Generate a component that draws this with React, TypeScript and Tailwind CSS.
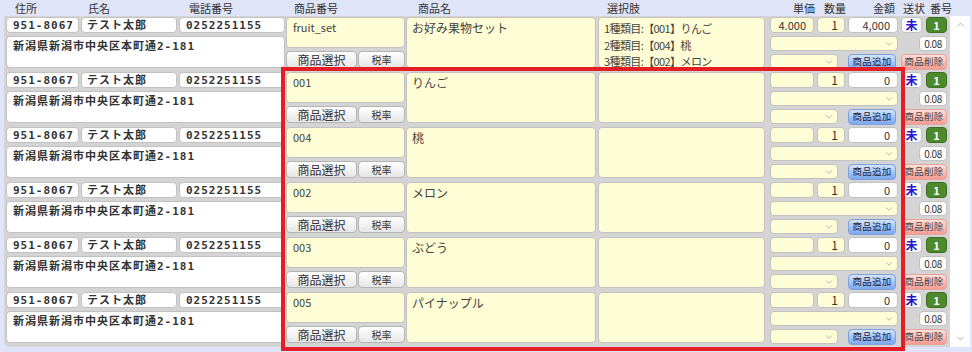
import { ChevronDown, ChevronUp } from "lucide-react";

type Row = {
  code: string;
  name: string;
  opts: string[];
  price: string;
  qty: string;
  amount: string;
};

const rows: Row[] = [
  {
    code: "fruit_set",
    name: "お好み果物セット",
    opts: ["1種類目:【001】りんご", "2種類目:【004】桃", "3種類目:【002】メロン"],
    price: "4.000",
    qty: "1",
    amount: "4,000",
  },
  { code: "001", name: "りんご", opts: [], price: "", qty: "1", amount: "0" },
  { code: "004", name: "桃", opts: [], price: "", qty: "1", amount: "0" },
  { code: "002", name: "メロン", opts: [], price: "", qty: "1", amount: "0" },
  { code: "003", name: "ぶどう", opts: [], price: "", qty: "1", amount: "0" },
  { code: "005", name: "パイナップル", opts: [], price: "", qty: "1", amount: "0" },
];

const box = "rounded-[4px] border border-[#c2c2c2]";
const yellow = "bg-[#fffdd6]";
const boldText =
  "font-['DejaVu_Sans_Mono','Noto_Sans_CJK_JP',monospace] font-bold text-[11px] tracking-[1px] text-[#333] leading-none";

const Select = ({ w }: { w: string }) => (
  <div className={`${w} h-[15px] ${box} ${yellow} flex items-center justify-end pr-[3px]`}>
    <ChevronDown size={10} strokeWidth={1.5} className="text-[#8a8a8a]" />
  </div>
);

const OrderRow = ({ r }: { r: Row }) => (
  <div className="flex h-[55px] pt-[1px] pl-[2px]">
    {/* 住所・氏名・電話 */}
    <div className="w-[279px] flex flex-col gap-[3px]">
      <div className="flex gap-[2px] h-[16px]">
        <div className={`w-[73px] ${box} bg-white pl-[6px] flex items-center ${boldText}`}>951-8067</div>
        <div className={`w-[96px] ${box} bg-white pl-[5px] flex items-center ${boldText}`}>テスト太郎</div>
        <div className={`w-[106px] ${box} bg-white pl-[6px] flex items-center ${boldText}`}>0252251155</div>
      </div>
      <div className={`h-[32px] ${box} bg-white pl-[6px] pt-[4px] ${boldText}`}>
        新潟県新潟市中央区本町通2-181
      </div>
    </div>

    {/* 商品番号 */}
    <div className="ml-[1px] w-[119px] flex flex-col">
      <div className={`h-[31px] ${box} ${yellow} pl-[6px] pt-[3px] text-[11px] leading-[13px] text-[#444]`}>
        {r.code}
      </div>
      <div className="mt-[3px] flex gap-[1px] h-[17px]">
        <button className="w-[71px] rounded-[4px] border border-[#b4b4b4] bg-gradient-to-b from-white to-[#e6e6e6] text-[12px] leading-none text-[#333]">
          商品選択
        </button>
        <button className="w-[47px] rounded-[4px] border border-[#b4b4b4] bg-gradient-to-b from-white to-[#e6e6e6] text-[10px] leading-none text-[#333]">
          税率
        </button>
      </div>
    </div>

    {/* 商品名 */}
    <div className={`ml-[1px] w-[190px] h-[51px] ${box} ${yellow} pl-[5px] pt-[2px] text-[12px] leading-[15px] text-[#444]`}>
      {r.name}
    </div>

    {/* 選択肢 */}
    <div
      className={`ml-[2px] w-[167px] h-[51px] ${box} ${yellow} pl-[5px] pt-[2px] text-[11px] leading-[16.5px] tracking-[-0.6px] text-[#444]`}
    >
      {r.opts.map((o) => (
        <div key={o}>{o}</div>
      ))}
    </div>

    {/* 単価・数量・金額 */}
    <div className="ml-[5px] w-[177px] flex flex-col">
      <div className="flex h-[16px] items-stretch">
        <div className={`w-[44px] ${box} ${yellow} pr-[7px] flex items-center justify-end text-[11px] text-[#333]`}>{r.price}</div>
        <div className={`ml-[3px] w-[28px] ${box} ${yellow} pr-[6px] flex items-center justify-end text-[12px] text-[#333]`}>{r.qty}</div>
        <div className={`ml-[3px] w-[50px] ${box} bg-white pr-[7px] flex items-center justify-end text-[11px] text-[#333]`}>{r.amount}</div>
        <div className={`ml-[3px] w-[21px] ${box} bg-white flex items-center justify-center text-[12px] font-bold text-[#2a16cc]`}>未</div>
        <div className="ml-[4px] w-[21px] rounded-[4px] border border-[#3c6e22] bg-[#4d8a2e] flex items-center justify-center text-[11px] font-bold text-white">1</div>
      </div>
      <div className="mt-[3px] flex h-[15px]">
        <Select w="w-[128px]" />
        <div className={`ml-[21px] w-[28px] ${box} bg-white flex items-center justify-center text-[10px] tracking-[-0.5px] text-[#333]`}>0.08</div>
      </div>
      <div className="mt-[3px] flex h-[16px]">
        <Select w="w-[68px]" />
        <button className="ml-[10px] w-[48px] rounded-[4px] border border-[#7e9fd8] bg-gradient-to-b from-[#d4e4fc] to-[#7ca7ee] text-[9.5px] tracking-[0.3px] leading-none text-[#223]">
          商品追加
        </button>
        <button className="ml-[5px] w-[46px] rounded-[4px] border border-[#e4a39d] bg-gradient-to-b from-[#fde0dc] to-[#f59b93] text-[9.5px] tracking-[0.3px] leading-none text-[#444]">
          商品削除
        </button>
      </div>
    </div>
  </div>
);

const headers: [string, string][] = [
  ["住所", "w-[88px] pl-[15px]"],
  ["氏名", "w-[101px]"],
  ["電話番号", "w-[105px]"],
  ["商品番号", "w-[124px]"],
  ["商品名", "w-[189px]"],
  ["選択肢", "w-[186px]"],
  ["単価", "w-[31px]"],
  ["数量", "w-[49px]"],
  ["金額", "w-[30px]"],
  ["送状", "w-[27px]"],
  ["番号", ""],
];

export default function App() {
  return (
    <div className="relative w-[972px] h-[352px] overflow-hidden bg-[#dfe4f8] font-['Noto_Sans_CJK_JP','Noto_Sans',sans-serif]">
      {/* Header */}
      <div className="flex h-[16px] items-center text-[11px] leading-none text-[#333]">
        {headers.map(([t, c]) => (
          <div key={t} className={`${c} shrink-0`}>
            {t}
          </div>
        ))}
      </div>

      {/* List */}
      <div className="flex h-[331px]">
        <div className="ml-[4px] w-[946px] bg-[#d4d4d4] rounded-bl-[6px] overflow-hidden">
          {rows.map((r, i) => (
            <OrderRow key={i} r={r} />
          ))}
        </div>
        <div className="w-[20px] bg-white flex flex-col items-center justify-between py-[3px] text-[#8a8a8a]">
          <ChevronUp size={11} strokeWidth={1.5} />
          <ChevronDown size={11} strokeWidth={1.5} />
        </div>
      </div>

      {/* Highlight */}
      <div className="absolute left-[281px] top-[67px] w-[624px] h-[284px] border-[4px] border-[#e31e24]" />
    </div>
  );
}
